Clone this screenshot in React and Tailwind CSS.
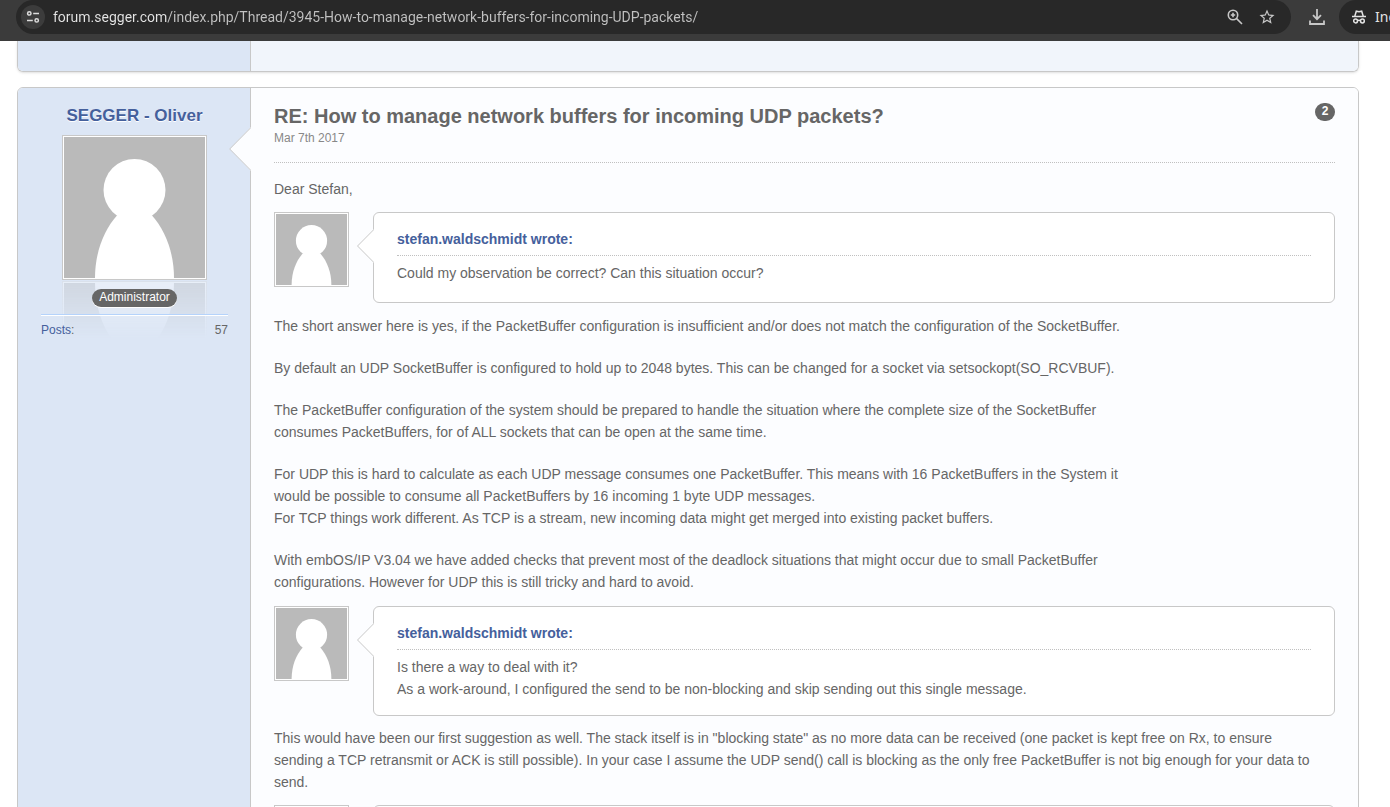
import { useId } from 'react';
import { MdStarOutline } from 'react-icons/md';

function TuneIcon() {
  return (
    <svg viewBox="0 0 14 14" className="size-[14px]" fill="none" stroke="#dcdcdc" strokeWidth="1.5">
      <circle cx="3.3" cy="3.4" r="1.7" />
      <path d="M7.2 3.4H13M1 10.4h5.8" />
      <circle cx="10.7" cy="10.4" r="1.7" />
    </svg>
  );
}

function ZoomIcon() {
  return (
    <svg viewBox="0 0 16 16" className="size-4" fill="none" stroke="currentColor" strokeWidth="1.6">
      <circle cx="6" cy="6" r="4.700" />
      <path d="M9.400 9.400 15 15M6 3.800v4.400M3.800 6h4.400" />
    </svg>
  );
}

function IncognitoIcon() {
  return (
    <svg viewBox="0 0 16 16" className="size-4 shrink-0" fill="none" stroke="#e3e3e3" strokeWidth="1.5">
      <path d="M1 7.600h14" />
      <path d="M3.800 7.200 5.300 2.200l2.700.6 2.700-.6 1.500 5" />
      <circle cx="4.600" cy="12" r="1.900" />
      <circle cx="11.400" cy="12" r="1.900" />
      <path d="M6.400 11.600q1.600-.9 3.200 0" />
    </svg>
  );
}

function BrowserBar() {
  return (
    <header className="flex h-[41px] shrink-0 items-start overflow-hidden bg-[#3b3b3b] pl-4">
      <div className="flex h-[34px] min-w-0 flex-1 items-center rounded-full bg-[#282828] pr-4 pl-[5px]">
        <button type="button" aria-label="View site information" className="flex size-6 shrink-0 items-center justify-center rounded-full bg-[#3c3c3c]">
          <TuneIcon />
        </button>
        <input
          type="text"
          aria-label="Address"
          defaultValue="forum.segger.com/index.php/Thread/3945-How-to-manage-network-buffers-for-incoming-UDP-packets/"
          className="ml-2 min-w-0 flex-1 bg-[linear-gradient(90deg,#e6e6e6_114px,#c2c2c2_114px)] bg-clip-text font-[Roboto,sans-serif] text-[14px] text-transparent outline-none"
        />
        <button type="button" aria-label="Zoom" className="flex size-4 items-center justify-center text-[#c7c7c7]">
          <ZoomIcon />
        </button>
        <button type="button" aria-label="Bookmark this page" className="ml-4 flex size-4 items-center justify-center text-[#c7c7c7]">
          <MdStarOutline className="size-[18px] shrink-0" />
        </button>
      </div>
      <button type="button" aria-label="Downloads" className="mr-3 ml-4 flex h-[34px] w-5 shrink-0 items-center justify-center text-[#c7c7c7]">
        <svg viewBox="0 0 16 16" className="size-4" fill="none" stroke="currentColor" strokeWidth="1.8">
          <path d="M8 0v10M4 6.2l4 4 4-4M1 11.5V15h14v-3.5" />
        </svg>
      </button>
      <button type="button" className="flex h-[34px] w-[51px] shrink-0 items-center gap-2 overflow-hidden rounded-l-full bg-[#282828] pl-3 font-['Noto_Sans',sans-serif] text-[14px] text-[#e3e3e3]">
        <IncognitoIcon />
        Inc
      </button>
    </header>
  );
}

function Person({ className }) {
  return (
    <svg viewBox="0 0 141 141" className={className} aria-hidden="true">
      <rect width="141" height="141" fill="#bababa" />
      <circle cx="70.5" cy="53" r="31" fill="#fff" />
      <path d="M53 78.5C40 93 31 115 31 141h79c0-26-9-48-22-62.500Z" fill="#fff" />
    </svg>
  );
}

function BubbleArrow({ className, fill }) {
  return (
    <svg viewBox="0 0 22 44" className={className} aria-hidden="true">
      <path d="M22 0 .7 22 22 44Z" fill={fill} />
      <path d="M22 .5.7 22 22 43.500" fill="none" stroke="#c8c8c8" strokeWidth="1" vectorEffect="non-scaling-stroke" />
    </svg>
  );
}

function Quote({ author, children }) {
  const headingId = useId();
  return (
    <div className="flex items-start gap-6">
      <a href="#author" aria-label={author} className="block shrink-0 border border-[#c8c8c8] bg-white p-px">
        <Person className="block size-[71px]" />
      </a>
      <blockquote aria-labelledby={headingId} className="relative min-h-[91px] min-w-0 flex-1 rounded-md border border-[#c8c8c8] bg-white px-[23px] pt-4 pb-[15px]">
        <BubbleArrow fill="#fff" className="absolute top-4 -left-[17px] h-[34px] w-[17px]" />
        <h3 id={headingId} className="border-b border-dotted border-[#c0c0c0] pb-[5px] leading-[21px] font-bold">
          <a href="#quote" className="text-[#45609c]">{author} wrote:</a>
        </h3>
        <p className="pt-[6px]">{children}</p>
      </blockquote>
    </div>
  );
}

function Sidebar() {
  return (
    <aside className="flex w-[233px] shrink-0 flex-col border-r border-[#c8c8c8] bg-[#dce6f5] pt-4 pr-[22px] pl-[23px]">
      <h2 className="text-center text-[17px] leading-6 font-bold">
        <a href="#profile" className="text-[#45609c] [text-shadow:0_1px_0_#fff]">SEGGER - Oliver</a>
      </h2>
      <div className="relative mt-[7px] self-center">
        <a href="#avatar" aria-label="SEGGER - Oliver" className="block border border-[#c8c8c8] bg-white p-px">
          <Person className="block size-[141px]" />
        </a>
        <div className="absolute top-full left-0 mt-px h-[58px] w-full overflow-hidden opacity-35 [mask-image:linear-gradient(#000,transparent)]">
          <div className="-mt-[87px] h-[145px]">
            <div className="mt-[87px] -scale-y-100 border border-[#d8d8d8] bg-white p-px">
              <Person className="block size-[141px]" />
            </div>
          </div>
        </div>
      </div>
      <p className="relative mt-[9px] self-center rounded-full bg-[#666] px-[7px] pb-[2px] text-[12px] leading-4 text-white [box-shadow:0_1px_0_#fff]">Administrator</p>
      <dl className="relative mt-[7px] flex justify-between border-t border-[#b5d3fb] pt-[6px] text-[12px] leading-[18px] [box-shadow:inset_0_1px_0_#fff]">
        <dt><a href="#posts" className="text-[#45609c]">Posts</a>:</dt>
        <dd>57</dd>
      </dl>
    </aside>
  );
}

function Post() {
  return (
    <article className="mt-[15px] flex overflow-hidden rounded-md border border-[#c8c8c8]">
      <Sidebar />
      <div className="relative min-w-0 flex-1 bg-[#fcfdff] px-[23px] pt-[15px] pb-6">
        <BubbleArrow fill="#fcfdff" className="absolute top-[39px] -left-[22px] h-[44px] w-[22px]" />
        <header className="flex items-start justify-between border-b border-dotted border-[#c0c0c0] pb-[15px]">
          <div>
            <h1 className="text-[20px] leading-[26px] font-bold">RE: How to manage network buffers for incoming UDP packets?</h1>
            <p className="text-[12px] leading-[18px] text-[#888]">Mar 7th 2017</p>
          </div>
          <a href="#post2" className="w-5 rounded-full bg-[#666] pb-[2px] text-center text-[12px] leading-4 font-bold text-white">2</a>
        </header>
        <p className="mt-[15px] mb-3">Dear Stefan,</p>
        <Quote author="stefan.waldschmidt">Could my observation be correct? Can this situation occur?</Quote>
        <div className="mt-3 mb-[13px] flex flex-col gap-5">
          <p>The short answer here is yes, if the PacketBuffer configuration is insufficient and/or does not match the configuration of the SocketBuffer.</p>
          <p>By default an UDP SocketBuffer is configured to hold up to 2048 bytes. This can be changed for a socket via setsockopt(SO_RCVBUF).</p>
          <p>
            The PacketBuffer configuration of the system should be prepared to handle the situation where the complete size of the SocketBuffer<br />
            consumes PacketBuffers, for of ALL sockets that can be open at the same time.
          </p>
          <p>
            For UDP this is hard to calculate as each UDP message consumes one PacketBuffer. This means with 16 PacketBuffers in the System it<br />
            would be possible to consume all PacketBuffers by 16 incoming 1 byte UDP messages.<br />
            For TCP things work different. As TCP is a stream, new incoming data might get merged into existing packet buffers.
          </p>
          <p>
            With embOS/IP V3.04 we have added checks that prevent most of the deadlock situations that might occur due to small PacketBuffer<br />
            configurations. However for UDP this is still tricky and hard to avoid.
          </p>
        </div>
        <Quote author="stefan.waldschmidt">
          Is there a way to deal with it?<br />
          As a work-around, I configured the send to be non-blocking and skip sending out this single message.
        </Quote>
        <p className="mt-[11px] mb-3">
          This would have been our first suggestion as well. The stack itself is in "blocking state" as no more data can be received (one packet is kept free on Rx, to ensure<br />
          sending a TCP retransmit or ACK is still possible). In your case I assume the UDP send() call is blocking as the only free PacketBuffer is not big enough for your data to<br />
          send.
        </p>
        <div className="flex items-start gap-6">
          <div className="shrink-0 border border-[#c8c8c8] bg-white p-px">
            <Person className="block size-[71px]" />
          </div>
          <div className="min-h-[91px] flex-1 rounded-md border border-[#c8c8c8] bg-white" />
        </div>
      </div>
    </article>
  );
}

export default function App() {
  return (
    <div className="flex h-screen flex-col overflow-hidden bg-white font-['Liberation_Sans',Arial,sans-serif] text-[14px] leading-[22px] text-[#666]">
      <BrowserBar />
      <main className="min-h-0 flex-1 overflow-hidden pr-[31px] pl-[17px]">
        <div className="flex h-[31px] overflow-hidden rounded-b-md border border-t-0 border-[#c8c8c8] shadow-sm">
          <div className="w-[233px] shrink-0 border-r border-[#c8c8c8] bg-[#dce6f5]" />
          <div className="flex-1 bg-[#f1f5fb]" />
        </div>
        <Post />
      </main>
    </div>
  );
}
